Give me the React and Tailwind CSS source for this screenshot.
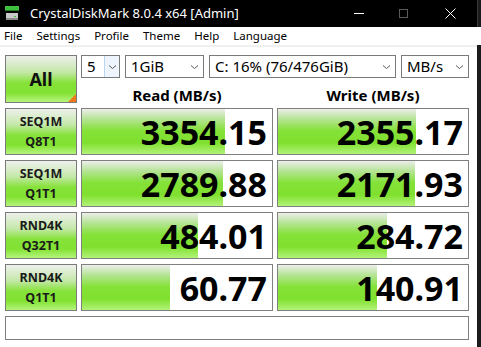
import React from "react";

const rows = [
  { a: "SEQ1M", b: "Q8T1", read: "3354.15", rw: 143, write: "2355.17", ww: 138 },
  { a: "SEQ1M", b: "Q1T1", read: "2789.88", rw: 141, write: "2171.93", ww: 137 },
  { a: "RND4K", b: "Q32T1", read: "484.01", rw: 116, write: "284.72", ww: 109 },
  { a: "RND4K", b: "Q1T1", read: "60.77", rw: 88, write: "140.91", ww: 99 },
];

const barBg =
  "bg-[linear-gradient(to_bottom,#eceeea_0%,#b6e496_22%,#84e238_48%,#80e02e_75%,#b2f27a_100%)]";
const btnBg =
  "bg-[linear-gradient(to_bottom,#eef0ec_0%,#c4e8a8_35%,#86e23a_58%,#82e232_80%,#b6f47e_100%)]";

function Chevron() {
  return (
    <svg width="9" height="6" viewBox="0 0 9 6" className="shrink-0">
      <path d="M1 1.5 L4.5 4.5 L8 1.5" fill="none" stroke="#5a5a5a" strokeWidth="1" />
    </svg>
  );
}

function Combo({ text, w, hover }) {
  return (
    <div
      className={`flex h-[23px] items-center border border-[#7a7a7a] bg-white ${w}`}
    >
      <span className="flex-1 pl-[5px] text-[15px] leading-none text-black">{text}</span>
      {hover ? (
        <div className="flex h-full w-[15px] items-center justify-center border-l border-[#b9d6f0] bg-[#eef5fc]">
          <Chevron />
        </div>
      ) : (
        <div className="flex h-full w-[18px] items-center justify-center">
          <Chevron />
        </div>
      )}
    </div>
  );
}

function Result({ value, width }) {
  return (
    <div className="relative h-[47px] overflow-hidden border border-[#808080] bg-white">
      <div className={`absolute inset-y-0 left-0 ${barBg}`} style={{ width }} />
      <div className="relative flex h-full items-center justify-end pr-[5px] text-[34px] font-bold leading-none text-black">
        {value}
      </div>
    </div>
  );
}

export default function App() {
  return (
    <div
      className="flex h-[347px] w-[481px] flex-col overflow-hidden bg-white"
      style={{ fontFamily: '"Noto Sans", "Open Sans", sans-serif' }}
    >
      {/* title bar */}
      <div className="flex h-[27px] shrink-0 items-center bg-black text-white">
        <svg width="14" height="15" viewBox="0 0 14 15" className="ml-[5px]">
          <rect x="0" y="0" width="14" height="4" fill="#3fbf3f" />
          <rect x="0" y="4" width="14" height="1" fill="#1f7f1f" />
          <rect x="1" y="7" width="12" height="7" fill="#c8c8c8" />
          <rect x="1" y="12" width="12" height="2" fill="#8a8a8a" />
          <rect x="9" y="10" width="2" height="1" fill="#3fbf3f" />
        </svg>
        <span className="ml-[11px] text-[13px]">CrystalDiskMark 8.0.4 x64 [Admin]</span>
        <div className="ml-auto flex h-full items-center">
          <div className="mr-[35px] h-px w-[10px] bg-white" />
          <div className="mr-[37px] h-[9px] w-[9px] border border-[#5a5a5a]" />
          <svg width="11" height="11" viewBox="0 0 11 11" className="mr-[21px]">
            <path d="M0.5 0.5 L10.5 10.5 M10.5 0.5 L0.5 10.5" stroke="white" strokeWidth="1" />
          </svg>
          <div className="h-full w-px bg-[#3a3a3a]" />
          <div className="h-full w-[3px] bg-[#1c1c1c]" />
        </div>
      </div>

      {/* menu bar */}
      <div className="flex h-[18px] shrink-0 items-center gap-[14px] pl-[4px] text-[11.5px] text-black">
        <span>File</span>
        <span>Settings</span>
        <span>Profile</span>
        <span>Theme</span>
        <span>Help</span>
        <span>Language</span>
      </div>

      <div className="flex flex-1">
        <div className="flex flex-1 flex-col border-t-2 border-[#f0f0f0] bg-white pl-[5px] pt-[8px]">
          <div className="grid grid-cols-[72px_192px_192px] gap-x-[4px] gap-y-[4px]">
            {/* top area */}
            <div
              className={`relative flex h-[48px] items-center justify-center border border-[#7a7a7a] ${btnBg} text-[18px] font-bold text-[#111]`}
            >
              All
              <div className="absolute bottom-0 right-0 h-0 w-0 border-b-[8px] border-l-[8px] border-b-[#f07818] border-l-transparent" />
            </div>
            <div className="col-span-2 flex h-[48px] flex-col">
              <div className="flex gap-[5px]">
                <Combo text="5" w="w-[39px]" hover />
                <Combo text="1GiB" w="w-[79px]" />
                <Combo text="C: 16% (76/476GiB)" w="w-[187px]" />
                <Combo text="MB/s" w="w-[68px]" />
              </div>
              <div className="grid flex-1 grid-cols-2 gap-x-[4px]">
                <div className="flex items-center justify-center pt-[9px] text-[15px] font-bold leading-none text-black">
                  Read (MB/s)
                </div>
                <div className="flex items-center justify-center pt-[9px] text-[15px] font-bold leading-none text-black">
                  Write (MB/s)
                </div>
              </div>
            </div>

            {rows.map((r, i) => (
              <React.Fragment key={i}>
                <div
                  className={`mt-[1px] flex h-[47px] flex-col items-center justify-center border border-[#7a7a7a] ${btnBg} text-[12.5px] font-bold leading-[20px] text-[#1a1a1a]`}
                >
                  <span>{r.a}</span>
                  <span>{r.b}</span>
                </div>
                <div className="mt-[1px]">
                  <Result value={r.read} width={r.rw} />
                </div>
                <div className="mt-[1px]">
                  <Result value={r.write} width={r.ww} />
                </div>
              </React.Fragment>
            ))}

            <div className="col-span-3 mt-[1px] h-[24px] border border-[#808080] bg-white" />
          </div>
        </div>
        <div className="w-[4px] bg-[#1c1c1c]" />
      </div>
    </div>
  );
}
